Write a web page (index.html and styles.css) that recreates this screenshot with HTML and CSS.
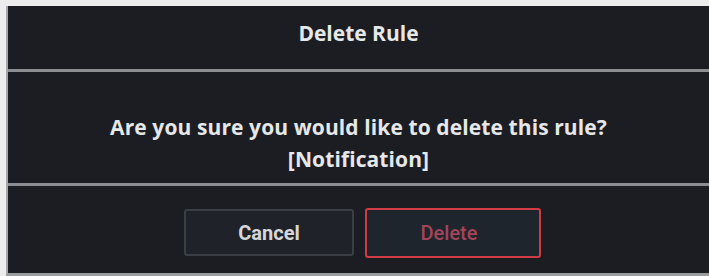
FILE: index.html
```html
<!DOCTYPE html>
<html>
<head>
<meta charset="utf-8">
<link rel="stylesheet" href="styles.css">
</head>
<body>
<div class="dialog">
  <div class="header">Delete Rule</div>
  <div class="body">
    <p class="msg">Are you sure you would like to delete this rule?</p>
    <p class="msg">[Notification]</p>
  </div>
  <div class="footer">
    <button class="btn cancel">Cancel</button>
    <button class="btn delete">Delete</button>
  </div>
</div>
</body>
</html>
```
FILE: styles.css
```css
html, body {
  margin: 0;
  padding: 0;
  background: #ececec;
  width: 709px;
  height: 276px;
  overflow: hidden;
}
.dialog {
  margin: 6px 0 0 6px;
  width: 701px;
  height: 267px;
  background: #1b1d22;
  border-left: 2px solid #a4a6a8;
  border-bottom: 3px solid #9a9c9e;
  display: flex;
  flex-direction: column;
  font-family: "Open Sans", "Noto Sans", sans-serif;
  color: #e6e7e9;
}
.header {
  display: flex;
  align-items: center;
  justify-content: center;
  font-weight: 700;
  font-size: 21px;
  letter-spacing: 0;
  border-bottom: 3px solid #8c8e91;
  padding-bottom: 10px;
  box-sizing: border-box;
  height: 66px;
}
.body {
  height: 114px;
  box-sizing: border-box;
  border-bottom: 3px solid #8c8e91;
  display: flex;
  flex-direction: column;
  align-items: center;
  justify-content: center;
  gap: 4px;
  padding-top: 31px;
}
.msg {
  margin: 0;
  font-weight: 700;
  font-size: 21px;
  line-height: 28px;
  letter-spacing: 0.1px;
}
.footer {
  flex: 1;
  display: flex;
  justify-content: center;
  align-items: center;
  gap: 11px;
  padding-left: 8px;
  padding-top: 6px;
}
.btn {
  font-family: Roboto, "Liberation Sans", sans-serif;
  font-weight: 700;
  font-size: 20px;
  background: #1f2329;
  border-radius: 3px;
  cursor: pointer;
  padding: 0;
}
.cancel {
  width: 170px;
  height: 47px;
  border: 2px solid #3a3e45;
  color: #d6d7d9;
}
.delete {
  width: 176px;
  height: 50px;
  border: 2px solid #d23a44;
  color: #a3445a;
  background: #1e252c;
  font-weight: 500;
  padding-right: 8px;
}
```
